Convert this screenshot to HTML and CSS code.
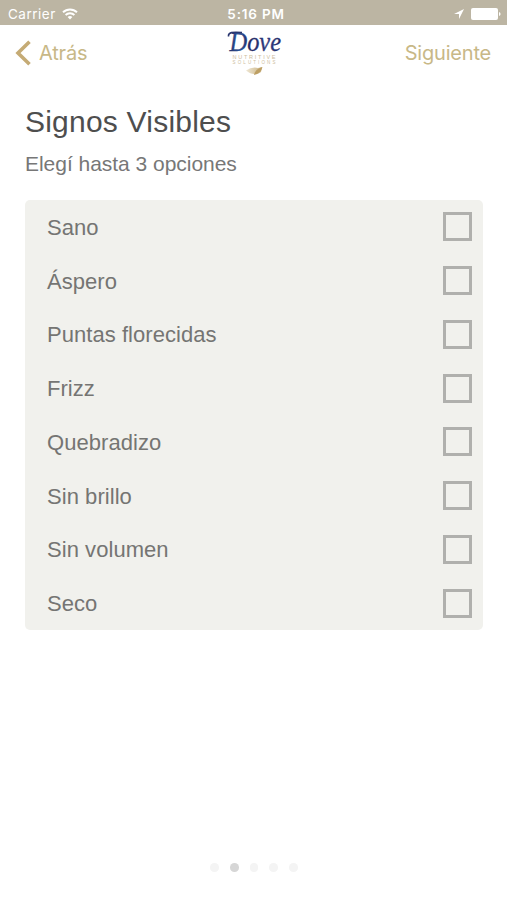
FILE: index.html
```html
<!DOCTYPE html>
<html lang="es">
<head>
<meta charset="utf-8">
<title>Signos Visibles</title>
<link rel="stylesheet" href="styles.css">
</head>
<body>
<div class="status">
  <div class="status-left"><span class="carrier">Carrier</span>
    <svg class="wifi" width="16" height="12" viewBox="0 0 16 12" fill="none" stroke="#fff" stroke-width="1.9"><path d="M1 4.3a10 10 0 0 1 14 0M3.6 7a6.3 6.3 0 0 1 8.8 0"/><path d="M5.6 9.1a3.6 3.6 0 0 1 4.8 0L8 11.6z" fill="#fff" stroke="none"/></svg>
  </div>
  <span class="time">5:16 PM</span>
  <div class="status-right">
    <svg width="10" height="10" viewBox="0 0 10 10"><path d="M10 0 0 5h5v5z" fill="#fff"/></svg>
    <svg width="30" height="12" viewBox="0 0 30 12" fill="#fff"><rect width="27" height="12" rx="2"/><path d="M28 4q1.6.3 1.6 2T28 8z"/></svg>
  </div>
</div>
<header class="nav">
  <a class="back"><svg width="17" height="26" viewBox="0 0 17 26" fill="none" stroke="#c5ab75" stroke-width="3.6"><path d="M14.500 1.800 3 13l11.500 11.200"/></svg><span>Atrás</span></a>
  <svg class="logo" width="62" height="52" viewBox="0 0 62 52">
    <defs>
      <linearGradient id="blue" x1="0" x2="1"><stop offset="0" stop-color="#252d69"/><stop offset=".2" stop-color="#2b62ab"/><stop offset=".38" stop-color="#242961"/><stop offset=".75" stop-color="#303f88"/><stop offset="1" stop-color="#252c66"/></linearGradient>
      <linearGradient id="gold" x1="0" x2="1"><stop offset="0" stop-color="#e9dfc5"/><stop offset="1" stop-color="#b99a5c"/></linearGradient>
    </defs>
    <text class="logo-name" x="7.500" y="23.500" textLength="51.500" lengthAdjust="spacingAndGlyphs" fill="url(#blue)">Dove</text>
    <path d="M6.500 9.500C6 5.500 10.500 4.500 20 5.600" fill="none" stroke="#29366f" stroke-width="1.600"/>
    <text class="logo-line" x="10.500" y="32" textLength="43">NUTRITIVE</text>
    <text class="logo-line small" x="10.500" y="37" textLength="43">SOLUTIONS</text>
    <path d="M24 43.500q6-4 12-2.500l4-1-1 5q-3 2.500-6 2-4 .500-9-3.500z" fill="url(#gold)" opacity=".75"/>
    <path d="M32 48q1-6 8.500-8-1.500 6.500-8.500 8z" fill="#bd9f63"/>
  </svg>
  <a class="next">Siguiente</a>
</header>
<main>
  <h1>Signos Visibles</h1>
  <p class="hint">Elegí hasta 3 opciones</p>
  <ul class="options">
    <li><span>Sano</span><i class="box"></i></li>
    <li><span>Áspero</span><i class="box"></i></li>
    <li><span>Puntas florecidas</span><i class="box"></i></li>
    <li><span>Frizz</span><i class="box"></i></li>
    <li><span>Quebradizo</span><i class="box"></i></li>
    <li><span>Sin brillo</span><i class="box"></i></li>
    <li><span>Sin volumen</span><i class="box"></i></li>
    <li><span>Seco</span><i class="box"></i></li>
  </ul>
</main>
<div class="dots"><i></i><i class="on"></i><i></i><i></i><i></i></div>
</body>
</html>
```
FILE: styles.css
```css
* { box-sizing: border-box; margin: 0; padding: 0; }
body {
  width: 507px; height: 900px; overflow: hidden; background: #fff;
  display: flex; flex-direction: column;
  font-family: "Liberation Sans", Arial, sans-serif;
}
.status {
  height: 25px; background: #bcb5a3; color: #fff;
  display: grid; grid-template-columns: 1fr auto 1fr; align-items: center;
  padding: 2px 6px 0 8px;
  font: 13.500px/20px Inter, sans-serif;
}
.status-left { display: flex; align-items: center; gap: 6px; }
.carrier { letter-spacing: .5px; }
.time { font-weight: 600; font-size: 13.500px; letter-spacing: .8px; padding-left: 3px; }
.status-right { display: flex; justify-content: flex-end; align-items: center; gap: 7px; }
.nav {
  height: 55px; padding: 0 16px 0 15px;
  display: grid; grid-template-columns: 1fr 62px 1fr; align-items: center;
  color: #c8b887; font: 20px/24px Inter, sans-serif;
}
.back { display: flex; align-items: center; gap: 7px; letter-spacing: -.2px; }
.next { text-align: right; letter-spacing: -.2px; }
.logo { overflow: visible; }
.logo-name { font: italic 27px "Liberation Serif", serif; stroke: #28316d; stroke-width: .3px; }
.logo-line { font: 5.500px "Liberation Sans", sans-serif; fill: #cdbd9e; }
.small { font-size: 4.500px; }
main { padding: 24px 24px 0 25px; }
h1 { font-size: 30px; line-height: 36px; font-weight: 400; color: #4e4e4e; letter-spacing: .22px; }
.hint { margin-top: 11px; font-size: 21px; line-height: 26px; color: #777; letter-spacing: -.03px; }
.options { list-style: none; margin-top: 23px; height: 430px; background: #f1f1ed; border-radius: 5px; display: grid; grid-template-rows: repeat(8, 1fr); }
.options li { display: flex; justify-content: space-between; align-items: center; padding: 0 11px 0 22px; font-size: 22px; line-height: 28px; color: #757573; }
.options span { padding-top: 2px; letter-spacing: .05px; }
.box { width: 29px; height: 29px; border: 3px solid #b0b0ad; }
.dots { margin-top: auto; padding: 0 0 28px 1px; display: flex; justify-content: center; gap: 11px; }
.dots i { width: 8.700px; height: 8.700px; border-radius: 50%; background: #f4f4f4; }
.dots .on { background: #d6d6d6; }
```
